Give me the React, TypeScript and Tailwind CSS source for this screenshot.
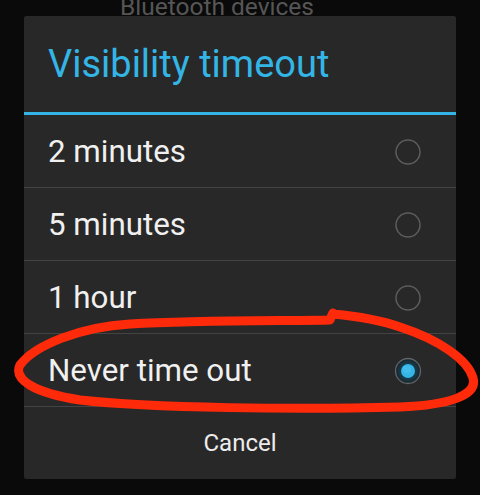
import React from "react";

const items = [
  { label: "2 minutes", selected: false },
  { label: "5 minutes", selected: false },
  { label: "1 hour", selected: false },
  { label: "Never time out", selected: true },
];

function Radio({ selected }: { selected: boolean }) {
  return (
    <svg width="28" height="28" viewBox="0 0 28 28">
      {selected ? (
        <>
          <circle cx="14" cy="14" r="12.5" fill="#1c2a31" stroke="#5e6468" strokeWidth="1.3" />
          <circle cx="14" cy="14" r="10" fill="#173746" />
          <circle cx="14" cy="14" r="7" fill="#33b5e5" />
          <circle cx="13" cy="12.5" r="4" fill="#4cc3ee" opacity="0.6" />
        </>
      ) : (
        <circle cx="14" cy="14" r="12" fill="none" stroke="#5c5c5c" strokeWidth="1.5" />
      )}
    </svg>
  );
}

export default function App() {
  return (
    <div
      className="relative w-[480px] h-[495px] overflow-hidden bg-[#0a0a0a]"
      style={{ fontFamily: "Roboto, 'Noto Sans', sans-serif" }}
    >
      <div className="h-[16px] overflow-hidden pl-[120px]">
        <div className="mt-[-5px] text-[24.5px] leading-[24px] text-[#565656]">Bluetooth devices</div>
      </div>
      <div className="ml-[24px] w-[432px] bg-[#282828] rounded-[2px] flex flex-col">
        <div className="h-[96px] flex items-center pl-[24px] text-[38px] leading-none text-[#33b5e5]">
          Visibility timeout
        </div>
        <div className="h-[3px] bg-[#33b5e5]" />
        {items.map((it) => (
          <div
            key={it.label}
            className="h-[73px] border-b border-[#434343] flex items-center justify-between pl-[24px] pr-[34px] pt-[2px]"
          >
            <span className="text-[31.3px] leading-none text-[#f0f0f0]">{it.label}</span>
            <Radio selected={it.selected} />
          </div>
        ))}
        <div className="h-[72px] flex items-center justify-center text-[24px] leading-none text-[#ececec]">
          Cancel
        </div>
      </div>
      <svg
        className="absolute inset-0 pointer-events-none"
        width="480"
        height="495"
        viewBox="0 0 480 495"
      >
        <path
          d="M 333 313 C 331 316, 331 318, 330 320 C 290 321, 200 320, 130 324 C 80 327, 35 345, 20 365 C 13 380, 35 393, 80 400 C 150 408, 300 410, 400 407 C 450 405, 478 395, 473 378 C 468 360, 440 340, 400 327 C 380 320, 355 316, 333 314"
          fill="none"
          stroke="#ff2a0a"
          strokeWidth="9"
          strokeLinecap="round"
          strokeLinejoin="round"
        />
      </svg>
    </div>
  );
}
